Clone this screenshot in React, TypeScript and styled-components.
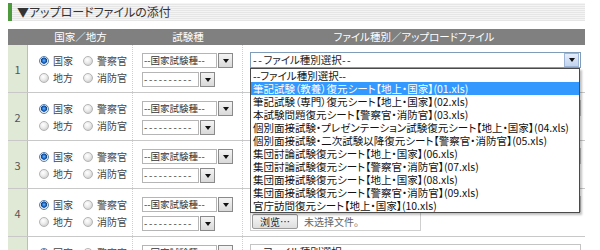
import styled, { createGlobalStyle } from "styled-components";

const GlobalStyle = createGlobalStyle`
  html, body {
    margin: 0;
    padding: 0;
    background: #fff;
  }
  body {
    font-family: "Noto Sans CJK JP", "Noto Sans", sans-serif;
    font-feature-settings: "palt";
    color: #222;
  }
`;

const Page = styled.div`
  padding: 3px 15px 0 8px;
  width: 577px;
`;

const SectionTitle = styled.div`
  height: 18px;
  line-height: 18px;
  border-left: 4px solid #4c9a3c;
  padding-left: 5px;
  font-size: 12px;
  color: #333;
  background: repeating-linear-gradient(
    to bottom,
    #f4f4f4 0px,
    #f4f4f4 1px,
    #e6e6e6 1px,
    #e6e6e6 2px
  );
`;

const Table = styled.div`
  margin-top: 8px;
  position: relative;
`;

const Row = styled.div`
  display: grid;
  grid-template-columns: 20px 105px 110px 1fr;
`;

const HeadRow = styled(Row)`
  height: 16px;
  background: #808080;
`;

const HeadCell = styled.div`
  color: #fff;
  font-size: 10.5px;
  line-height: 16px;
  text-align: center;
  white-space: nowrap;
`;

const BodyRow = styled(Row)`
  height: 47px;
  border-bottom: 1px solid #c8c8c8;
`;

const NumCell = styled.div`
  background: #dfe9d6;
  border-right: 1px solid #bdbdbd;
  display: flex;
  align-items: center;
  justify-content: center;
  font-size: 11px;
  color: #555;
`;

const RegionCell = styled.div`
  padding: 7px 0 0 11px;
  border-right: 1px dotted #cfcfcf;
`;

const RadioLine = styled.div`
  display: flex;
  height: 17px;
  align-items: center;
`;

const RadioItem = styled.label`
  width: 44px;
  display: flex;
  align-items: center;
  font-size: 10px;
  color: #444;
  white-space: nowrap;
`;

const RadioDot = styled.span<{ $on?: boolean }>`
  flex: none;
  width: 8px;
  height: 8px;
  border-radius: 50%;
  margin-right: 4px;
  border: 1px solid ${(p) => (p.$on ? "#5a7fa8" : "#b4b4b4")};
  background: ${(p) =>
    p.$on
      ? "radial-gradient(circle at 50% 45%, #6fb6ff 0, #1e6fd0 1.8px, #0b3f86 2.8px, #dfe7ef 3.4px, #f6f8fb 5px)"
      : "radial-gradient(circle at 40% 35%, #ffffff 0, #ececec 3px, #d6d6d6 5px)"};
`;

const ExamCell = styled.div`
  padding: 8px 0 0 9px;
  border-right: 1px dotted #cfcfcf;
  display: flex;
  flex-direction: column;
  gap: 4px;
`;

const MiniSelect = styled.div`
  display: flex;
  gap: 1px;
  height: 15px;
`;

const MiniBox = styled.div<{ $w: number }>`
  width: ${(p) => p.$w}px;
  border: 1px solid #b5b5b5;
  font-size: 9.5px;
  line-height: 13px;
  padding-left: 1px;
  color: #333;
  white-space: nowrap;
  overflow: hidden;
`;

const Dash = styled.span<{ $gap?: number }>`
  letter-spacing: ${(p) => p.$gap ?? 1.6}px;
`;

const MiniButton = styled.div`
  width: 13px;
  height: 13px;
  border: 1px solid #8a8a8a;
  background: linear-gradient(#f4f4f4, #d9d9d9);
  display: flex;
  align-items: center;
  justify-content: center;
`;

const Arrow = styled.span`
  width: 0;
  height: 0;
  border-left: 3.5px solid transparent;
  border-right: 3.5px solid transparent;
  border-top: 4px solid #111;
`;

const FileCell = styled.div`
  padding: 7px 4px 0 7px;
`;

const FileSelectWrap = styled.div`
  position: relative;
`;

const FileSelect = styled.div<{ $focus?: boolean }>`
  height: 14px;
  border: 1px solid ${(p) => (p.$focus ? "#7f9db9" : "#c4c4c4")};
  display: flex;
  align-items: center;
  justify-content: space-between;
  font-size: 10.5px;
  line-height: 14px;
  padding-left: 2px;
  color: #222;
`;

const FocusButton = styled.div`
  width: 13px;
  height: 12px;
  margin-right: 1px;
  border: 1px solid #9fb5d6;
  background: linear-gradient(#e4edfb, #c3d4ee);
  display: flex;
  align-items: center;
  justify-content: center;
`;

const PlainArrow = styled.span`
  margin-right: 5px;
  display: flex;
`;

const DropList = styled.div`
  position: absolute;
  top: 16px;
  left: 0;
  width: 328px;
  background: #fff;
  border: 1px solid #4a4a4a;
  box-shadow: 2px 2px 2px rgba(0, 0, 0, 0.25);
  z-index: 10;
`;

const DropItem = styled.div<{ $on?: boolean }>`
  height: 13px;
  line-height: 13px;
  font-size: 10.5px;
  padding-left: 2px;
  white-space: nowrap;
  background: ${(p) => (p.$on ? "#3399ff" : "transparent")};
  color: ${(p) => (p.$on ? "#fff" : "#111")};
`;

const FileInput = styled.div`
  width: 168px;
  height: 17px;
  border: 1px solid #cfcfcf;
  display: flex;
  align-items: center;
  gap: 6px;
  padding-left: 1px;
  font-family: "Noto Sans CJK SC", "Noto Sans", sans-serif;
`;

const BrowseButton = styled.div`
  width: 44px;
  height: 13px;
  border: 1px solid #9a9a9a;
  border-radius: 2px;
  background: linear-gradient(#f7f7f7, #dedede);
  font-size: 10px;
  line-height: 13px;
  text-align: center;
  color: #222;
`;

const NoFile = styled.span`
  font-size: 10px;
  color: #666;
`;

const fileTypes = [
  "--ファイル種別選択--",
  "筆記試験（教養）復元シート【地上・国家】(01.xls)",
  "筆記試験（専門）復元シート【地上・国家】(02.xls)",
  "本試験問題復元シート【警察官・消防官】(03.xls)",
  "個別面接試験・プレゼンテーション試験復元シート【地上・国家】(04.xls)",
  "個別面接試験・二次試験以降復元シート【警察官・消防官】(05.xls)",
  "集団討論試験復元シート【地上・国家】(06.xls)",
  "集団討論試験復元シート【警察官・消防官】(07.xls)",
  "集団面接試験復元シート【地上・国家】(08.xls)",
  "集団面接試験復元シート【警察官・消防官】(09.xls)",
  "官庁訪問復元シート【地上・国家】(10.xls)",
];

function UploadRow({ num, open }: { num: number; open?: boolean }) {
  return (
    <BodyRow>
      <NumCell>{num}</NumCell>
      <RegionCell>
        <RadioLine>
          <RadioItem>
            <RadioDot $on />
            国家
          </RadioItem>
          <RadioItem>
            <RadioDot />
            警察官
          </RadioItem>
        </RadioLine>
        <RadioLine>
          <RadioItem>
            <RadioDot />
            地方
          </RadioItem>
          <RadioItem>
            <RadioDot />
            消防官
          </RadioItem>
        </RadioLine>
      </RegionCell>
      <ExamCell>
        <MiniSelect>
          <MiniBox $w={72}>
            <Dash $gap={0}>--</Dash>国家試験種<Dash $gap={0}>--</Dash>
          </MiniBox>
          <MiniButton>
            <Arrow />
          </MiniButton>
        </MiniSelect>
        <MiniSelect>
          <MiniBox $w={54}>
            <Dash>----------</Dash>
          </MiniBox>
          <MiniButton>
            <Arrow />
          </MiniButton>
        </MiniSelect>
      </ExamCell>
      <FileCell>
        <FileSelectWrap>
          <FileSelect $focus={open}>
            <span>
              <Dash>--</Dash>ファイル種別選択<Dash>--</Dash>
            </span>
            {open ? (
              <FocusButton>
                <Arrow />
              </FocusButton>
            ) : (
              <PlainArrow>
                <Arrow />
              </PlainArrow>
            )}
          </FileSelect>
          {open && (
            <DropList>
              {fileTypes.map((t, i) => (
                <DropItem key={t} $on={i === 1}>
                  {t}
                </DropItem>
              ))}
            </DropList>
          )}
        </FileSelectWrap>
        <FileInput>
          <BrowseButton>浏览…</BrowseButton>
          <NoFile>未选择文件。</NoFile>
        </FileInput>
      </FileCell>
    </BodyRow>
  );
}

export default function App() {
  return (
    <Page>
      <GlobalStyle />
      <SectionTitle>▼アップロードファイルの添付</SectionTitle>
      <Table>
        <HeadRow>
          <HeadCell />
          <HeadCell>国家／地方</HeadCell>
          <HeadCell>試験種</HeadCell>
          <HeadCell>ファイル種別／アップロードファイル</HeadCell>
        </HeadRow>
        {[1, 2, 3, 4, 5].map((n) => (
          <UploadRow key={n} num={n} open={n === 1} />
        ))}
      </Table>
    </Page>
  );
}
